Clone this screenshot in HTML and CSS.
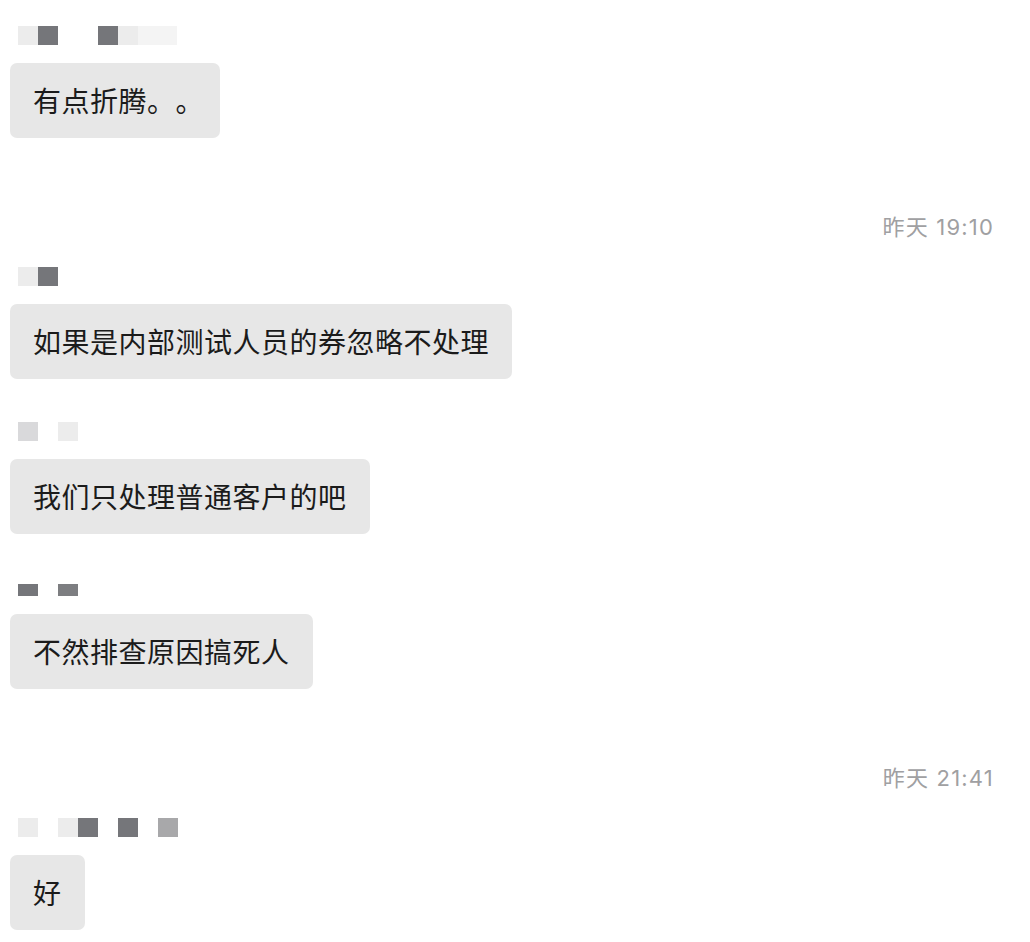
FILE: index.html
```html
<!DOCTYPE html>
<html lang="zh-CN">
<head>
    <meta charset="UTF-8">
    <meta name="viewport" content="width=device-width, initial-scale=1.0">
    <title>聊天记录</title>
    <link rel="stylesheet" href="styles.css">
</head>
<body>
    <div class="chat">
        <div class="msg">
            <div class="name">
                <span class="px l"></span><span class="px d"></span><span class="px s"></span><span class="px s"></span><span class="px d"></span><span class="px l"></span><span class="px f wide"></span>
            </div>
            <div class="bubble end-punct">有点折腾。。</div>
        </div>

        <div class="time">昨天 19:10</div>

        <div class="msg">
            <div class="name">
                <span class="px l"></span><span class="px d"></span>
            </div>
            <div class="bubble">如果是内部测试人员的券忽略不处理</div>
        </div>

        <div class="msg">
            <div class="name">
                <span class="px m"></span><span class="px s"></span><span class="px l"></span>
            </div>
            <div class="bubble">我们只处理普通客户的吧</div>
        </div>

        <div class="msg">
            <div class="name low">
                <span class="px d"></span><span class="px s"></span><span class="px g"></span>
            </div>
            <div class="bubble">不然排查原因搞死人</div>
        </div>

        <div class="time">昨天 21:41</div>

        <div class="msg">
            <div class="name">
                <span class="px l"></span><span class="px s"></span><span class="px l"></span><span class="px d"></span><span class="px s"></span><span class="px d"></span><span class="px s"></span><span class="px g2"></span>
            </div>
            <div class="bubble">好</div>
        </div>
    </div>
</body>
</html>
```

FILE: styles.css
```css
body {
    margin: 0;
    padding: 0;
    background: #ffffff;
    font-family: "Noto Sans CJK SC", "Noto Sans", sans-serif;
}
.chat {
    padding-top: 17px;
}
.msg {
    padding-left: 10px;
    margin-bottom: 34px;
}
.name {
    display: flex;
    align-items: center;
    height: 30px;
    padding-left: 8px;
    margin-bottom: 16px;
}
.name.low {
    align-items: flex-end;
}
.px {
    display: block;
    width: 20px;
    height: 19px;
    margin-top: 6px;
}
.low .px {
    height: 12px;
    margin-top: 0;
    margin-bottom: 2px;
}
.px.wide {
    width: 39px;
}
.px.s { background: transparent; }
.px.l { background: #ececec; }
.px.f { background: #f4f4f4; }
.px.m { background: #d9d9db; }
.px.d { background: #75767a; }
.px.g { background: #7d7e81; }
.px.g2 { background: #a8a8aa; }
.bubble {
    display: inline-block;
    background: #e7e7e7;
    color: #1b1b1b;
    border-radius: 7px;
    padding: 18px 23px;
    font-size: 28px;
    line-height: 39px;
    letter-spacing: 0.5px;
    text-spacing-trim: space-all;
}
.bubble.end-punct {
    padding-right: 16px;
}
.time {
    text-align: right;
    padding: 40px 36px 16px 0;
    color: #a0a0a2;
    font-family: "Inter", "Noto Sans CJK SC", sans-serif;
    font-size: 22px;
    line-height: 30px;
    letter-spacing: 1.2px;
}
```
